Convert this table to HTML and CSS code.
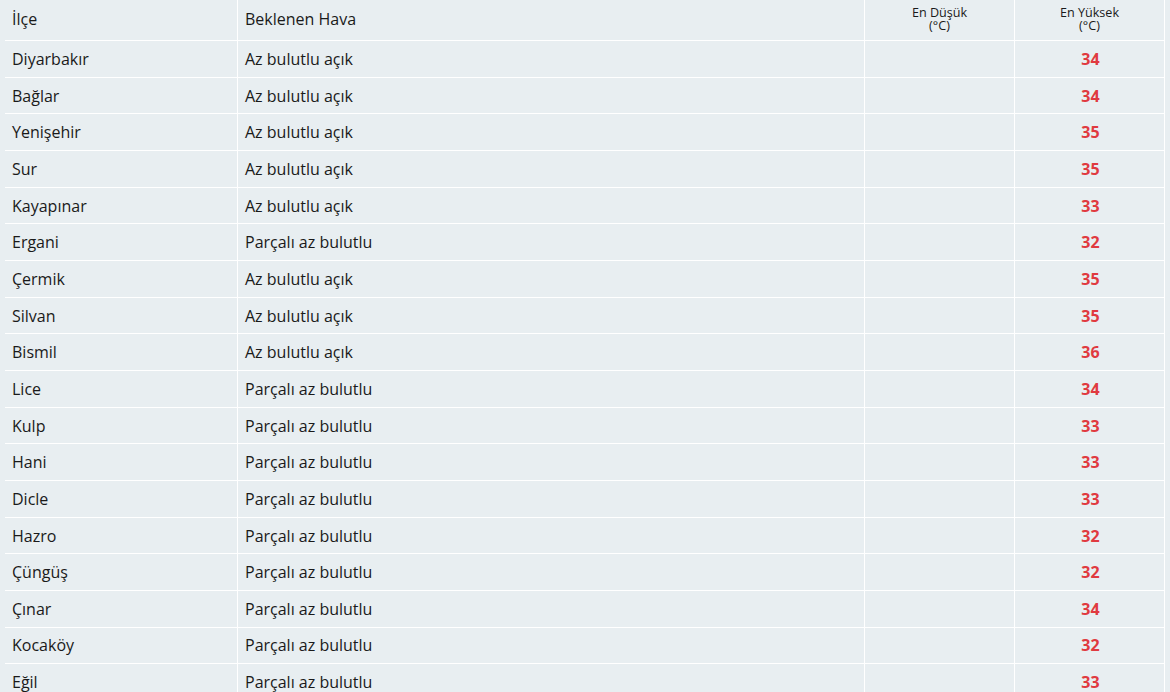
FILE: index.html
```html
<!DOCTYPE html>
<html lang="tr">
<head>
<meta charset="utf-8">
<title>Diyarbakır Hava Durumu</title>
<link rel="stylesheet" href="styles.css">
</head>
<body>
<div class="wrap">
<table class="weather">
  <colgroup>
    <col class="c-name"><col class="c-desc"><col class="c-min"><col class="c-max">
  </colgroup>
  <thead>
    <tr>
      <th class="th-text">İlçe</th>
      <th class="th-text">Beklenen Hava</th>
      <th class="th-small">En Düşük<br>(°C)</th>
      <th class="th-small">En Yüksek<br>(°C)</th>
    </tr>
  </thead>
  <tbody>
    <tr><td>Diyarbakır</td><td>Az bulutlu açık</td><td></td><td class="max">34</td></tr>
    <tr><td>Bağlar</td><td>Az bulutlu açık</td><td></td><td class="max">34</td></tr>
    <tr><td>Yenişehir</td><td>Az bulutlu açık</td><td></td><td class="max">35</td></tr>
    <tr><td>Sur</td><td>Az bulutlu açık</td><td></td><td class="max">35</td></tr>
    <tr><td>Kayapınar</td><td>Az bulutlu açık</td><td></td><td class="max">33</td></tr>
    <tr><td>Ergani</td><td>Parçalı az bulutlu</td><td></td><td class="max">32</td></tr>
    <tr><td>Çermik</td><td>Az bulutlu açık</td><td></td><td class="max">35</td></tr>
    <tr><td>Silvan</td><td>Az bulutlu açık</td><td></td><td class="max">35</td></tr>
    <tr><td>Bismil</td><td>Az bulutlu açık</td><td></td><td class="max">36</td></tr>
    <tr><td>Lice</td><td>Parçalı az bulutlu</td><td></td><td class="max">34</td></tr>
    <tr><td>Kulp</td><td>Parçalı az bulutlu</td><td></td><td class="max">33</td></tr>
    <tr><td>Hani</td><td>Parçalı az bulutlu</td><td></td><td class="max">33</td></tr>
    <tr><td>Dicle</td><td>Parçalı az bulutlu</td><td></td><td class="max">33</td></tr>
    <tr><td>Hazro</td><td>Parçalı az bulutlu</td><td></td><td class="max">32</td></tr>
    <tr><td>Çüngüş</td><td>Parçalı az bulutlu</td><td></td><td class="max">32</td></tr>
    <tr><td>Çınar</td><td>Parçalı az bulutlu</td><td></td><td class="max">34</td></tr>
    <tr><td>Kocaköy</td><td>Parçalı az bulutlu</td><td></td><td class="max">32</td></tr>
    <tr><td>Eğil</td><td>Parçalı az bulutlu</td><td></td><td class="max">33</td></tr>
  </tbody>
</table>
</div>
</body>
</html>
```

FILE: styles.css
```css
html, body {
  margin: 0;
  padding: 0;
  background: #e8eef1;
  font-family: "Open Sans", "Noto Sans", sans-serif;
  color: #1a1a1a;
  overflow: hidden;
}

.wrap {
  padding: 0 5px;
}

.weather {
  width: 1160px;
  border-collapse: separate;
  border-spacing: 0;
  table-layout: fixed;
}

.c-name { width: 233px; }
.c-desc { width: 627px; }
.c-min { width: 150px; }
.c-max { width: 150px; }

.weather th,
.weather td {
  box-sizing: border-box;
  border-bottom: 1px solid #ffffff;
  border-right: 1px solid #ffffff;
  padding: 0 7px;
  font-size: 16px;
  text-align: left;
  vertical-align: middle;
}

.weather th {
  height: 41px;
  font-weight: normal;
  line-height: 20px;
  padding-bottom: 2px;
}

.weather th.th-small {
  font-size: 12.6px;
  line-height: 12.5px;
  text-align: center;
  vertical-align: top;
  padding-top: 7px;
  padding-bottom: 0;
}

.weather td {
  height: 36.67px;
  line-height: 20.67px;
  padding-top: 1px;
}

.weather td.max {
  text-align: center;
  font-weight: bold;
  color: #e03a40;
  padding-left: 8px;
  padding-right: 6px;
}
```
